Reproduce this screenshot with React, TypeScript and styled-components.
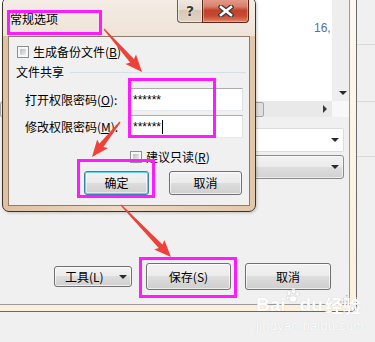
import React from "react";
import styled, { createGlobalStyle } from "styled-components";

const GlobalStyle = createGlobalStyle`
  html, body { margin: 0; padding: 0; background: #f0f0f0; }
  body {
    font-family: "Noto Sans CJK SC", "Noto Sans", sans-serif;
    font-size: 12px;
    color: #000;
  }
  *, *::before, *::after { box-sizing: border-box; }
`;

const Screen = styled.div`
  position: relative;
  width: 375px;
  height: 342px;
  overflow: hidden;
  background: #f0f0f0;
  display: flex;
  align-items: flex-start;
`;

/* ---------- outer "save as" window ---------- */
const OuterFrame = styled.div`
  flex: none;
  width: 357px;
  height: 312px;
  padding: 0 6px 6px 0;
  background: linear-gradient(180deg, #fdf8ee, #fbf0dc);
  border-right: 1px solid #6a6a6a;
  border-bottom: 1px solid #6a6a6a;
  border-bottom-right-radius: 7px;
`;

const OuterClient = styled.div`
  position: relative;
  height: 100%;
  background: #f0f0f0;
  border-right: 1px solid #9a9a9a;
  border-bottom: 1px solid #9a9a9a;
  display: flex;
  flex-direction: column;
`;

const BackStrip = styled.div`
  flex: 1;
  display: flex;
  flex-direction: column;
`;

const BackCell = styled.div<{ $h: number }>`
  height: ${(p) => p.$h}px;
  border-bottom: 1px solid #d8d8d8;
`;

const FileArea = styled.div`
  display: grid;
  grid-template-columns: 1fr 17px;
  grid-template-rows: 101px 16px;
`;

const FileList = styled.div`
  background: #fff;
  padding: 21px 0 0 314px;
  color: #56718f;
  font-family: "Liberation Sans", Arial, sans-serif;
  font-size: 12px;
  line-height: 14px;
  white-space: nowrap;
  overflow: hidden;
`;

const VScroll = styled.div`
  background: #eeeeee;
  display: flex;
  flex-direction: column;
  justify-content: flex-end;
  align-items: center;
  padding: 0 0 6px 4px;
`;

const HScroll = styled.div`
  background: #e9e9e9;
  display: flex;
  align-items: center;
  padding-right: 5px;
`;

const HThumb = styled.div`
  width: 264px;
  height: 15px;
  border: 1px solid #a5a5a5;
  border-radius: 2px;
  background: linear-gradient(90deg, #f3f3f3, #dedede);
  margin-right: auto;
`;

const ScrollCorner = styled.div`
  background: #f8f8f8;
`;

const TriDown = styled.span`
  display: block;
  width: 0;
  height: 0;
  border-left: 4px solid transparent;
  border-right: 4px solid transparent;
  border-top: 4px solid #2a2a2a;
`;

const TriRight = styled.span`
  display: block;
  width: 0;
  height: 0;
  border-top: 4px solid transparent;
  border-bottom: 4px solid transparent;
  border-left: 4px solid #3a3a3a;
`;

const ComboPlain = styled.div`
  margin: 11px 0 0 40px;
  width: 304px;
  height: 24px;
  background: #fff;
  border: 1px solid #dcdcdc;
  border-radius: 2px;
  display: flex;
  align-items: center;
  justify-content: flex-end;
  padding-right: 4px;
`;

const ComboButton = styled(ComboPlain)`
  margin-top: 3px;
  border-color: #8a8a8a;
  border-radius: 3px;
  background: linear-gradient(180deg, #f2f2f2 0%, #ebebeb 50%, #dddddd 50%, #d2d2d2 100%);
  box-shadow: inset 0 0 0 1px rgba(255, 255, 255, 0.6);
`;

const FooterRow = styled.div`
  margin-top: 84px;
  height: 27px;
  padding-left: 54px;
  display: flex;
  align-items: center;
  gap: 14px;
`;

const WinButton = styled.div<{ $w: number; $h: number }>`
  width: ${(p) => p.$w}px;
  height: ${(p) => p.$h}px;
  border: 1px solid #707070;
  border-radius: 3px;
  background: linear-gradient(180deg, #f2f2f2 0%, #ebebeb 50%, #dddddd 50%, #cfcfcf 100%);
  box-shadow: inset 0 0 0 1px rgba(255, 255, 255, 0.65);
  display: flex;
  align-items: center;
  justify-content: center;
  font-size: 12px;
  line-height: 14px;
  white-space: nowrap;
`;

const ToolButton = styled(WinButton)`
  justify-content: space-between;
  padding: 0 4px 0 10px;
`;

const DefaultButton = styled(WinButton)`
  border-color: #3c7fb1;
  box-shadow: inset 0 0 0 1px #5fd3f6, inset 0 0 0 2px rgba(255, 255, 255, 0.5);
`;

const Key = styled.span`
  text-decoration: underline;
  text-underline-offset: 1px;
`;

const Grip = styled.svg`
  position: absolute;
  right: 1px;
  bottom: 1px;
  width: 9px;
  height: 9px;
`;

/* ---------- modal dialog ---------- */
const Dialog = styled.div`
  position: absolute;
  left: 2px;
  top: -3px;
  width: 254px;
  height: 215px;
  border: 1px solid #3e3328;
  border-radius: 7px;
  background: linear-gradient(90deg, #dfc1a1 0%, #ecd8c3 45%, #e3c7aa 100%);
  padding: 0 5px 5px;
  display: flex;
  flex-direction: column;
  box-shadow: 1px 1px 3px rgba(0, 0, 0, 0.2);
  z-index: 2;
`;

const TitleBar = styled.div`
  height: 38px;
  margin: 0 -5px;
  padding: 0 5px;
  border-radius: 6px 6px 0 0;
  background: linear-gradient(180deg, #f4ede6, #eee3d7);
  display: flex;
  justify-content: space-between;
  align-items: flex-start;
`;

const TitleText = styled.div`
  margin: 13px 0 0 2px;
  line-height: 16px;
  font-size: 12px;
  color: #000;
`;

const CaptionGroup = styled.div`
  display: flex;
  margin-right: 1px;
`;

const HelpButton = styled.div`
  width: 25px;
  height: 25px;
  border: 1px solid #6f5e4e;
  border-top: none;
  border-right: none;
  border-radius: 0 0 0 4px;
  background: linear-gradient(180deg, #f2eae2 0%, #e6d9cc 50%, #d9c7b5 51%, #e2d3c4 100%);
  box-shadow: inset 0 0 0 1px rgba(255, 255, 255, 0.45);
  display: flex;
  justify-content: center;
  padding-top: 5px;
  font-family: "DejaVu Sans", sans-serif;
  font-weight: bold;
  font-size: 14px;
  line-height: 16px;
  color: #3a3a3a;
  text-shadow: 0 0 2px #fff, 0 0 1px #fff;
`;

const CloseButton = styled.div`
  width: 47px;
  height: 25px;
  border: 1px solid #5b2417;
  border-top: none;
  border-radius: 0 0 4px 0;
  background: linear-gradient(
    180deg,
    #e7a291 0%,
    #d9806b 35%,
    #c2412a 52%,
    #c84a31 75%,
    #e0866c 100%
  );
  box-shadow: inset 0 0 0 1px rgba(255, 210, 190, 0.45);
  display: flex;
  justify-content: center;
  padding-top: 7px;
`;

const DialogClient = styled.div`
  flex: 1;
  background: #f0f0f0;
  border: 1px solid #8b7c6d;
  display: flex;
  flex-direction: column;
`;

const CheckRow = styled.div<{ $top: number; $left: number }>`
  margin-top: ${(p) => p.$top}px;
  padding-left: ${(p) => p.$left}px;
  height: 14px;
  display: flex;
  align-items: center;
  gap: 4px;
  line-height: 14px;
  white-space: nowrap;
`;

const CheckBox = styled.span`
  flex: none;
  width: 12px;
  height: 12px;
  border: 1px solid #8e8f8f;
  padding: 2px;
  background: linear-gradient(135deg, #b7bcc2, #eeeeef) content-box, #f6f6f6;
`;

const GroupHeader = styled.div`
  margin-top: 6px;
  height: 14px;
  padding-left: 7px;
  display: flex;
  align-items: center;
  line-height: 14px;
`;

const GroupRule = styled.span`
  flex: 1;
  height: 1px;
  margin: 0 3px 0 6px;
  background: #d5dfe5;
`;

const PwRow = styled.div<{ $top: number }>`
  margin-top: ${(p) => p.$top}px;
  padding-left: 16px;
  display: grid;
  grid-template-columns: 105px 113px;
  align-items: center;
  height: 23px;
  white-space: nowrap;
`;

const PwField = styled.div`
  height: 23px;
  background: #fff;
  border: 1px solid;
  border-color: #abadb3 #dbdfe6 #e3e9ef #e2e3ea;
  padding-left: 2px;
  display: flex;
  align-items: center;
  font-family: "Liberation Sans", Arial, sans-serif;
  font-size: 12px;
`;

const Caret = styled.span`
  width: 1px;
  height: 14px;
  margin-left: 1px;
  background: #000;
`;

const DialogButtons = styled.div`
  margin-top: 7px;
  padding-left: 75px;
  display: flex;
  gap: 20px;
`;

/* ---------- overlays ---------- */
const Watermark = styled.div`
  position: absolute;
  left: 256px;
  top: 287px;
  z-index: 3;
  pointer-events: none;
  display: flex;
  flex-direction: column;
  color: #fdfdfd;
  text-shadow: 0 0 1px rgba(0, 0, 0, 0.16);
  font-family: "Liberation Sans", Arial, sans-serif;
`;

const MarkTop = styled.div`
  display: flex;
  align-items: flex-end;
  height: 28px;
  font-size: 19px;
  font-weight: bold;
  line-height: 20px;
  white-space: nowrap;
`;

const MarkCJK = styled.span`
  font-family: "Noto Sans CJK SC", sans-serif;
  font-size: 18px;
  margin-left: 2px;
`;

const MarkUrl = styled.div`
  font-size: 13px;
  line-height: 16px;
  margin-top: 3px;
  letter-spacing: 0.2px;
`;

const Annotations = styled.svg`
  position: absolute;
  left: 0;
  top: 0;
  width: 375px;
  height: 342px;
  pointer-events: none;
  z-index: 5;
`;

type Pt = [number, number];

function arrowPoints(t: Pt, p: Pt, headLen = 15, headHalf = 7, neckHalf = 2.6, tailHalf = 0.6): string {
  const dx = p[0] - t[0];
  const dy = p[1] - t[1];
  const len = Math.hypot(dx, dy);
  const ux = dx / len;
  const uy = dy / len;
  const nx = -uy;
  const ny = ux;
  const bx = p[0] - ux * headLen;
  const by = p[1] - uy * headLen;
  const pts: Pt[] = [
    [t[0] + nx * tailHalf, t[1] + ny * tailHalf],
    [bx + nx * neckHalf, by + ny * neckHalf],
    [bx + nx * headHalf - ux * 2, by + ny * headHalf - uy * 2],
    p,
    [bx - nx * headHalf - ux * 2, by - ny * headHalf - uy * 2],
    [bx - nx * neckHalf, by - ny * neckHalf],
    [t[0] - nx * tailHalf, t[1] - ny * tailHalf],
  ];
  return pts.map((q) => `${q[0].toFixed(1)},${q[1].toFixed(1)}`).join(" ");
}

const highlightBoxes = [
  { x: 8.5, y: 11.5, w: 92, h: 22 },
  { x: 129.5, y: 79.5, w: 85, h: 57 },
  { x: 78.5, y: 160.5, w: 75, h: 36 },
  { x: 140.5, y: 258.5, w: 95, h: 38 },
];

const arrows: [Pt, Pt][] = [
  [[104, 29], [142, 72]],
  [[120, 122], [92, 157]],
  [[121, 205], [171, 257]],
];

export default function App() {
  return (
    <>
      <GlobalStyle />
      <Screen>
        <OuterFrame>
          <OuterClient>
            <FileArea>
              <FileList>16,</FileList>
              <VScroll>
                <TriDown />
              </VScroll>
              <HScroll>
                <HThumb />
                <TriRight />
              </HScroll>
              <ScrollCorner />
            </FileArea>
            <ComboPlain>
              <TriDown />
            </ComboPlain>
            <ComboButton>
              <TriDown />
            </ComboButton>
            <FooterRow>
              <ToolButton $w={78} $h={21}>
                <span>工具(L)</span>
                <TriDown />
              </ToolButton>
              <WinButton $w={85} $h={27}>
                保存(S)
              </WinButton>
              <WinButton $w={86} $h={27}>
                取消
              </WinButton>
            </FooterRow>
            <Grip viewBox="0 0 9 9">
              {[
                [7, 1],
                [7, 4],
                [4, 4],
                [7, 7],
                [4, 7],
                [1, 7],
              ].map(([x, y]) => (
                <rect key={`${x}-${y}`} x={x} y={y} width="1.5" height="1.5" fill="#b8b8b8" />
              ))}
            </Grip>
          </OuterClient>
        </OuterFrame>

        <BackStrip>
          <BackCell $h={45} />
          <BackCell $h={57} />
          <BackCell $h={55} />
        </BackStrip>

        <Dialog>
          <TitleBar>
            <TitleText>常规选项</TitleText>
            <CaptionGroup>
              <HelpButton>?</HelpButton>
              <CloseButton>
                <svg width="16" height="12" viewBox="0 0 16 12">
                  <path d="M3 2 L13 10 M13 2 L3 10" stroke="#3b3b3b" strokeWidth="5" strokeLinecap="square" />
                  <path d="M3 2 L13 10 M13 2 L3 10" stroke="#ffffff" strokeWidth="2.6" strokeLinecap="square" />
                </svg>
              </CloseButton>
            </CaptionGroup>
          </TitleBar>
          <DialogClient>
            <CheckRow $top={8} $left={8}>
              <CheckBox />
              <span>
                生成备份文件(<Key>B</Key>)
              </span>
            </CheckRow>
            <GroupHeader>
              <span>文件共享</span>
              <GroupRule />
            </GroupHeader>
            <PwRow $top={9}>
              <span>
                打开权限密码(<Key>O</Key>):
              </span>
              <PwField>******</PwField>
            </PwRow>
            <PwRow $top={4}>
              <span>
                修改权限密码(<Key>M</Key>):
              </span>
              <PwField>
                ******
                <Caret />
              </PwField>
            </PwRow>
            <CheckRow $top={12} $left={121}>
              <CheckBox />
              <span>
                建议只读(<Key>R</Key>)
              </span>
            </CheckRow>
            <DialogButtons>
              <DefaultButton $w={65} $h={24}>
                确定
              </DefaultButton>
              <WinButton $w={73} $h={24}>
                取消
              </WinButton>
            </DialogButtons>
          </DialogClient>
        </Dialog>

        <Watermark>
          <MarkTop>
            <span>Bai</span>
            <svg width="14" height="26" viewBox="0 0 14 26">
              <g fill="#fdfdfd" stroke="#dadada" strokeWidth="0.8">
                <ellipse cx="3" cy="4" rx="2" ry="2.5" />
                <ellipse cx="7.5" cy="2.5" rx="2" ry="2.3" />
                <ellipse cx="11.5" cy="5" rx="1.8" ry="2.2" />
                <ellipse cx="1.8" cy="9" rx="1.6" ry="2" />
                <ellipse cx="7" cy="10" rx="4" ry="3.2" />
              </g>
            </svg>
            <span>du</span>
            <MarkCJK>经验</MarkCJK>
          </MarkTop>
          <MarkUrl>jingyan.baidu.com</MarkUrl>
        </Watermark>

        <Annotations viewBox="0 0 375 342">
          {highlightBoxes.map((b, i) => (
            <rect key={i} x={b.x} y={b.y} width={b.w} height={b.h} fill="none" stroke="#ff1aff" strokeWidth="3" />
          ))}
          {arrows.map(([t, p], i) => (
            <polygon key={i} points={arrowPoints(t, p)} fill="#f0403a" />
          ))}
        </Annotations>
      </Screen>
    </>
  );
}
